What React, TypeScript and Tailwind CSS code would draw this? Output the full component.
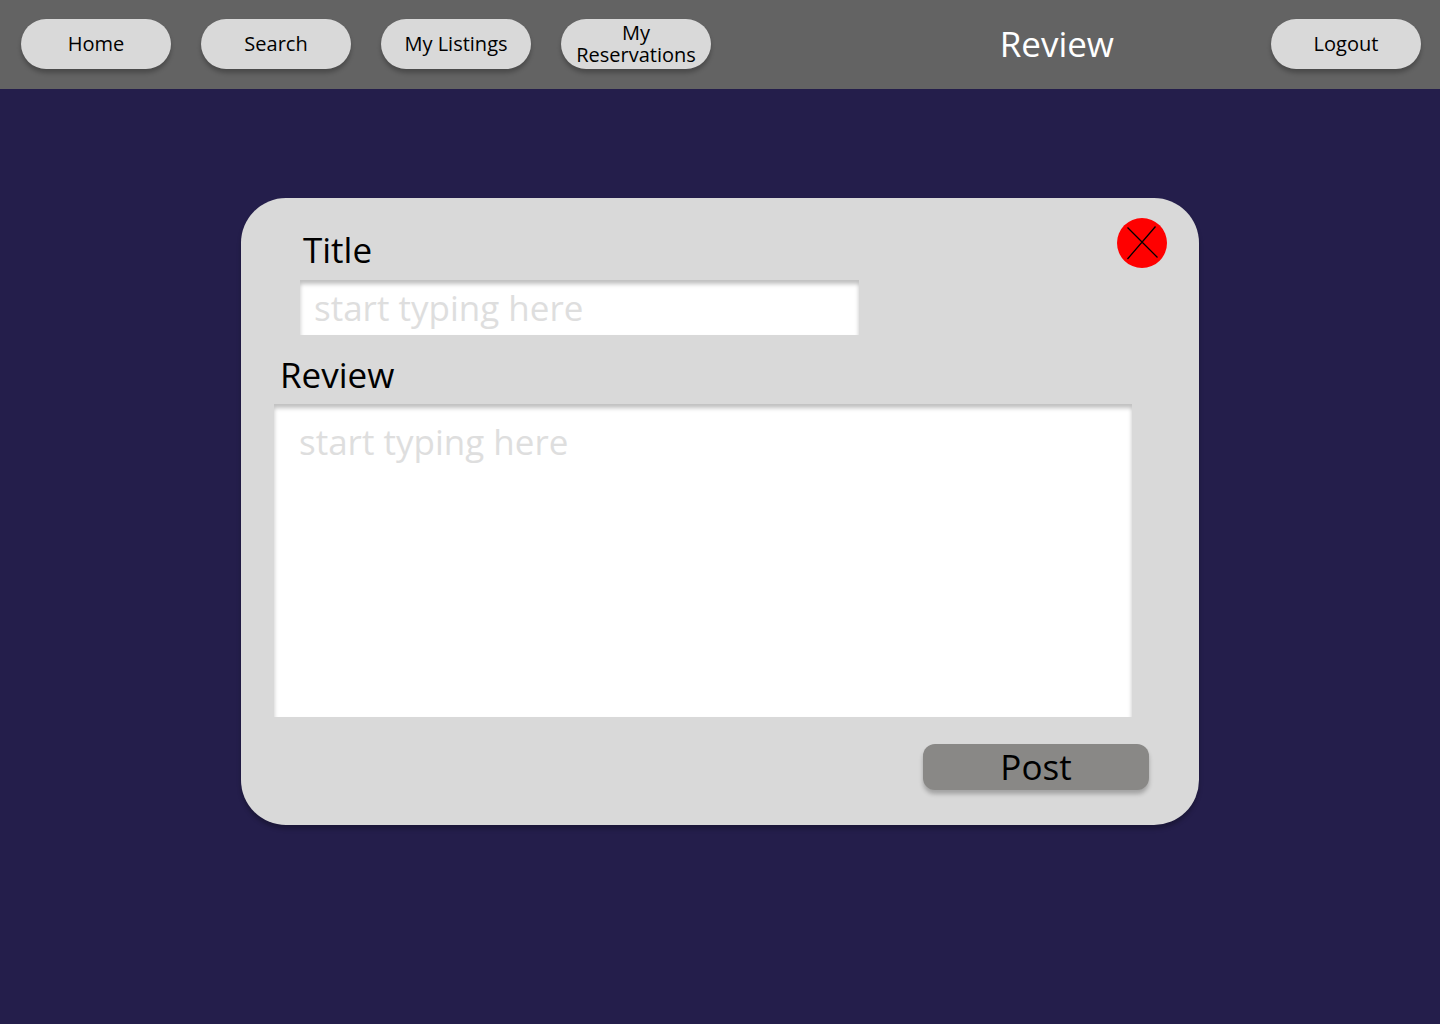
import type { ReactNode } from "react";

function NavButton({ children }: { children: ReactNode }) {
  return (
    <button
      type="button"
      className="flex h-[50px] w-[150px] shrink-0 items-center justify-center rounded-full bg-[#d9d9d9] px-3 text-center text-[20px] leading-[22px] text-black shadow-[0_4px_4px_rgba(0,0,0,0.25)]"
    >
      {children}
    </button>
  );
}

function CloseIcon() {
  return (
    <svg viewBox="0 0 50 50" className="size-full" fill="none" stroke="black" strokeWidth="1.3" aria-hidden="true">
      <path d="M10.5 9.5 40.5 39.5M38.5 8.5 10.5 41" />
    </svg>
  );
}

const field =
  "block bg-white text-[35px] leading-[48px] text-black shadow-[inset_0_4px_4px_rgba(0,0,0,0.25)] outline-none placeholder:text-[#dedede] placeholder:opacity-100";

export default function App() {
  return (
    <div className="min-h-screen bg-[#241e4b] pb-12 font-['Open_Sans',sans-serif]">
      <header className="flex items-center justify-between bg-[#636363] pt-[19px] pr-[19px] pb-5 pl-[21px]">
        <nav className="flex gap-[30px]">
          <NavButton>Home</NavButton>
          <NavButton>Search</NavButton>
          <NavButton>My Listings</NavButton>
          <NavButton>My Reservations</NavButton>
        </nav>
        <div className="flex items-center gap-[157px]">
          <h1 className="text-[35px] leading-[48px] text-white">Review</h1>
          <NavButton>Logout</NavButton>
        </div>
      </header>

      <main className="mx-auto mt-[109px] max-w-[958px]">
        <form
          className="rounded-[45px] bg-[#d9d9d9] pt-5 pb-[35px] shadow-[0_4px_4px_rgba(0,0,0,0.25)]"
          onSubmit={(e) => e.preventDefault()}
        >
          <div className="flex items-start justify-between pr-8 pl-[59px]">
            <div className="w-[559px] pt-2">
              <label htmlFor="title" className="mb-[6px] block pl-[3px] text-[35px] leading-[48px] text-black">
                Title
              </label>
              <input
                id="title"
                type="text"
                placeholder="start typing here"
                className={`${field} h-[55px] w-full px-[14px]`}
              />
            </div>
            <button type="button" aria-label="Close" className="size-[50px] rounded-full bg-[#ff0000]">
              <CloseIcon />
            </button>
          </div>

          <div className="mt-4 pr-[67px] pl-[33px]">
            <label htmlFor="review" className="mb-[5px] block pl-[6px] text-[35px] leading-[48px] text-black">
              Review
            </label>
            <textarea
              id="review"
              placeholder="start typing here"
              className={`${field} h-[313px] w-full resize-none px-[25px] pt-[14px]`}
            />
          </div>

          <div className="mt-[27px] flex justify-end pr-[50px]">
            <button
              type="submit"
              className="h-[46px] w-[226px] rounded-xl bg-[#898886] text-[35px] leading-[46px] text-black shadow-[0_4px_4px_rgba(0,0,0,0.25)]"
            >
              Post
            </button>
          </div>
        </form>
      </main>
    </div>
  );
}
